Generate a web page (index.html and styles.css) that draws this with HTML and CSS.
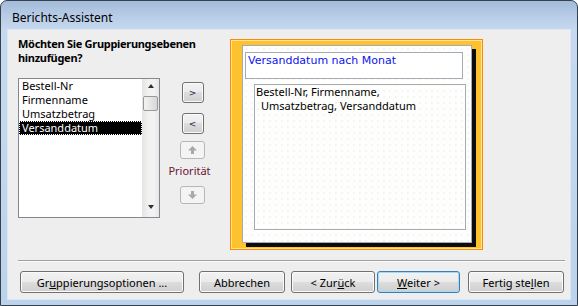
FILE: index.html
```html
<!DOCTYPE html>
<html>
    <head>
        <meta http-equiv="content-type" content="text/html; charset=utf-8" />
        <title>Berichts-Assistent</title>
        <link rel="stylesheet" href="styles.css">
    </head>
    <body>
        <div class="window">
            <div class="titlebar">Berichts-Assistent</div>
            <div class="client">
                <div class="main">
                    <div class="fields">
                        <h1 class="question">Möchten Sie Gruppierungsebenen<br>hinzufügen?</h1>
                        <div class="listbox">
                            <ul class="items">
                                <li>Bestell-Nr</li>
                                <li>Firmenname</li>
                                <li>Umsatzbetrag</li>
                                <li class="selected">Versanddatum</li>
                            </ul>
                            <div class="scrollbar">
                                <span class="scroll-btn"><span class="tri up"></span></span>
                                <span class="thumb"></span>
                                <span class="track"></span>
                                <span class="scroll-btn"><span class="tri down"></span></span>
                            </div>
                        </div>
                    </div>

                    <div class="movers">
                        <button class="small" id="addBtn">&gt;</button>
                        <button class="small second" id="removeBtn">&lt;</button>
                        <button class="small disabled up-btn">
                            <svg width="9" height="8" viewBox="0 0 9 8"><path d="M4.5 0 L9 4.5 L6 4.5 L6 8 L3 8 L3 4.5 L0 4.5 Z" fill="#a9a9a9"/></svg>
                        </button>
                        <span class="priority">Priorität</span>
                        <button class="small disabled down-btn">
                            <svg width="9" height="8" viewBox="0 0 9 8"><path d="M4.5 8 L9 3.5 L6 3.5 L6 0 L3 0 L3 3.5 L0 3.5 Z" fill="#a9a9a9"/></svg>
                        </button>
                    </div>

                    <div class="preview">
                        <div class="page">
                            <div class="group-head">Versanddatum nach Monat</div>
                            <div class="group-body">
                                <span class="line">Bestell-Nr, Firmenname,</span>
                                <span class="line indent">Umsatzbetrag, Versanddatum</span>
                            </div>
                        </div>
                    </div>
                </div>

                <div class="separator"></div>

                <div class="actions">
                    <button class="btn options">Gr<u>u</u>ppierungsoptionen ...</button>
                    <button class="btn cancel">Abbrechen</button>
                    <button class="btn back">&lt; Zur<u>ü</u>ck</button>
                    <button class="btn next default"><u>W</u>eiter &gt;</button>
                    <button class="btn finish">Fertig ste<u>l</u>len</button>
                </div>
            </div>
        </div>
    </body>
</html>
```

FILE: styles.css
```css
* {
    margin: 0;
    padding: 0;
    box-sizing: border-box;
}

body {
    width: 578px;
    height: 306px;
    background: #ffffff;
    font-family: "Noto Sans", "Liberation Sans", sans-serif;
    font-size: 11px;
    color: #000;
}

.window {
    width: 578px;
    height: 306px;
    display: flex;
    flex-direction: column;
    padding: 0 7px 6px 7px;
    border: 1px solid #36414f;
    border-radius: 7px 7px 0 0;
    background: linear-gradient(180deg, #a3bbd9 0px, #b6cbe6 14px, #c6d9ee 29px, #bdd3eb 100%);
}

.titlebar {
    height: 29px;
    padding: 4px 0 0 4px;
    line-height: 25px;
    font-size: 12px;
    white-space: nowrap;
}

.client {
    flex: 1;
    display: flex;
    flex-direction: column;
    background: #eeeeee;
    box-shadow: 0 0 0 1px #dbe7f4;
}

.main {
    display: flex;
    height: 230px;
    padding: 7px 0 0 10px;
}

.fields {
    width: 142px;
}

.question {
    font-size: 11px;
    font-weight: 700;
    line-height: 14px;
    letter-spacing: -0.3px;
    white-space: nowrap;
}

.listbox {
    display: flex;
    height: 140px;
    margin-top: 13px;
    border: 1px solid #828790;
    background: #fff;
}

.items {
    flex: 1;
    list-style: none;

    li {
        height: 14px;
        line-height: 14px;
        padding-left: 3px;
        white-space: nowrap;
    }

    .selected {
        background: #000;
        color: #fff;
        outline: 1px dotted #fff;
        outline-offset: -1px;
    }
}

.scrollbar {
    width: 17px;
    display: flex;
    flex-direction: column;
    background: linear-gradient(90deg, #e3e3e3, #f2f2f2 40%, #f2f2f2 70%, #e6e6e6);

    .scroll-btn {
        height: 17px;
        display: flex;
        align-items: center;
        justify-content: center;
    }

    .track {
        flex: 1;
    }

    .thumb {
        height: 15px;
        margin: 0 1px;
        border: 1px solid #999;
        border-radius: 2px;
        background: linear-gradient(90deg, #f3f3f3, #e6e6e6 50%, #d6d6d6);
    }

    .tri {
        width: 0;
        height: 0;
        border-left: 3.5px solid transparent;
        border-right: 3.5px solid transparent;
    }

    .up {
        border-bottom: 4px solid #303030;
        margin-top: -3px;
    }

    .down {
        border-top: 4px solid #303030;
        margin-top: -3px;
    }
}

.movers {
    width: 25px;
    margin-left: 20px;
    display: flex;
    flex-direction: column;
    align-items: center;

    .small {
        width: 22px;
        height: 21px;
        margin-top: 45px;
        border: 1px solid #707070;
        border-radius: 3px;
        background: linear-gradient(180deg, #f2f2f2, #ebebeb 50%, #dddddd 50%, #cfcfcf);
        box-shadow: inset 0 0 0 1px #fbfbfb;
        font-family: "DejaVu Sans", sans-serif;
        font-size: 9px;
        color: #1b2a48;
        display: flex;
        align-items: center;
        justify-content: center;
    }

    .second {
        margin-top: 10px;
    }

    .disabled {
        width: 25px;
        height: 18px;
        border-color: #b4b8bb;
        background: #f4f4f4;
        box-shadow: none;
    }

    .up-btn {
        margin-top: 7px;
    }

    .down-btn {
        margin-top: 9px;
    }

    .priority {
        margin: 5px 6px 0 0;
        line-height: 13px;
        font-size: 11px;
        color: #6a1232;
        white-space: nowrap;
    }
}

.preview {
    width: 253px;
    height: 211px;
    margin: 2px 0 0 25px;
    border: 1px solid #ff8a00;
    background: #fec22e;
    box-shadow: inset 0 0 0 1px #ffe59a;

    .page {
        width: 230px;
        height: 198px;
        margin: 5px 0 0 11px;
        padding: 6px 0 0 2px;
        border: 1px solid #a4abb4;
        background-color: #fefefc;
        background-image: radial-gradient(circle, #eef0f3 0.6px, transparent 0.9px);
        background-size: 6px 6px;
        box-shadow: 4px 4px 0 #0c0c0c;
    }

    .group-head {
        width: 218px;
        height: 27px;
        padding: 1px 0 0 2px;
        border: 1px solid #a4abb4;
        background: #fff;
        font-family: "DejaVu Sans", sans-serif;
        font-size: 11px;
        line-height: 14px;
        color: #0a14f0;
    }

    .group-body {
        width: 212px;
        height: 146px;
        margin: 5px 0 0 9px;
        padding: 0 0 0 1px;
        border: 1px solid #a4abb4;

        .line {
            display: block;
            line-height: 14px;
            white-space: nowrap;
        }

        .indent {
            padding-left: 5px;
        }
    }
}

.separator {
    margin: 0 5px 0 10px;
    border-top: 1px solid #a0a0a0;
    border-bottom: 1px solid #fbfbfb;
}

.actions {
    display: flex;
    margin-top: 9px;
    padding-left: 12px;

    .btn {
        height: 22px;
        border: 1px solid #707070;
        border-radius: 3px;
        background: linear-gradient(180deg, #f2f2f2, #ebebeb 50%, #dddddd 50%, #cfcfcf);
        box-shadow: inset 0 0 0 1px #fbfbfb;
        font-family: "Noto Sans", "Liberation Sans", sans-serif;
        font-size: 11px;
        color: #000;
        white-space: nowrap;
    }

    .default {
        border-color: #3c7fb1;
        box-shadow: inset 0 0 0 1px #9fdcf7;
    }

    .options { width: 164px; }
    .cancel { width: 86px; margin-left: 15px; }
    .back { width: 84px; margin-left: 6px; }
    .next { width: 83px; margin-left: 2px; }
    .finish { width: 96px; margin-left: 8px; }
}
```
